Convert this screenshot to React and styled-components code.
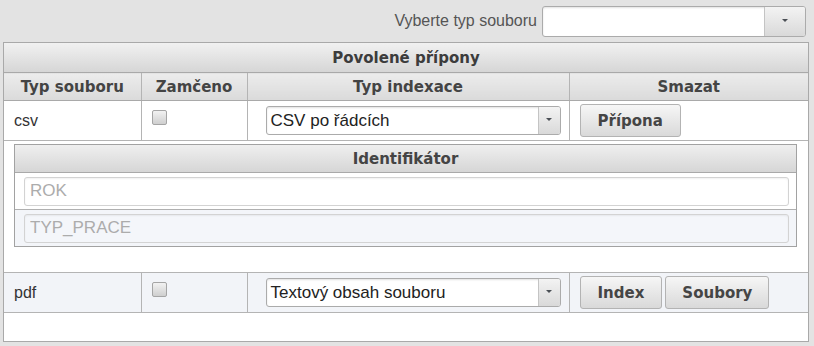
import React from 'react';
import styled, { createGlobalStyle } from 'styled-components';

const GlobalStyle = createGlobalStyle`
  html, body {
    margin: 0;
    padding: 0;
    background: #e3e3e3;
    font-family: "Liberation Sans", Arial, sans-serif;
  }
`;

const Page = styled.div`
  width: 814px;
  height: 346px;
  overflow: hidden;
`;

const TopBar = styled.div`
  display: flex;
  justify-content: flex-end;
  align-items: center;
  height: 42px;
  padding-right: 8px;
  box-sizing: border-box;
  label {
    color: #555;
    font-size: 16px;
    margin-right: 5px;
  }
`;

const SelectBox = styled.div`
  display: flex;
  width: ${p => p.$width}px;
  height: ${p => p.$height}px;
  box-sizing: border-box;
  border: 1px solid #ababab;
  border-radius: 3px;
  background: #fff;
  box-shadow: inset 0 1px 2px rgba(0, 0, 0, 0.12);
  overflow: hidden;
`;

const SelectText = styled.div`
  flex: 1;
  display: flex;
  align-items: center;
  padding-left: 4px;
  font-size: 17px;
  color: #222;
  white-space: nowrap;
`;

const SelectArrow = styled.div`
  width: ${p => p.$width}px;
  border-left: 1px solid #c4c4c4;
  background: linear-gradient(#f3f3f3, #d9d9d9);
  display: flex;
  align-items: center;
  justify-content: center;
  &::after {
    content: '';
    border-left: 3px solid transparent;
    border-right: 3px solid transparent;
    border-top: 3px solid #4a4f55;
    margin-bottom: 2px;
  }
`;

const Panel = styled.div`
  margin: 0 5px 0 3px;
  border: 1px solid #a9a9a9;
  background: #fff;
`;

const Table = styled.table`
  width: 100%;
  border-collapse: collapse;
  table-layout: fixed;
`;

const Caption = styled.th`
  height: 29px;
  padding: 0;
  font-family: "DejaVu Sans", Verdana, sans-serif;
  font-size: 15px;
  font-weight: bold;
  color: #3c3c3c;
  background: linear-gradient(#f1f1f1, #d6d6d6);
  border-bottom: 1px solid #a9a9a9;
`;

const HeadCell = styled.th`
  height: 27px;
  padding: 0;
  font-family: "DejaVu Sans", Verdana, sans-serif;
  font-size: 15px;
  font-weight: bold;
  color: #444;
  background: linear-gradient(#ececec, #dadada);
  border-bottom: 1px solid #a9a9a9;
  & + & {
    border-left: 1px solid #b4b4b4;
  }
`;

const Row = styled.tr`
  background: ${p => (p.$alt ? '#f2f4f8' : '#fff')};
  td {
    border-bottom: 1px solid #b4b4b4;
  }
`;

const Cell = styled.td`
  height: ${p => p.$h || 39}px;
  padding: 0 0 0 ${p => p.$pl ?? 10}px;
  font-size: 16px;
  color: #333;
  vertical-align: middle;
  & + & {
    border-left: 1px solid #b4b4b4;
  }
`;

const Checkbox = styled.span`
  display: inline-block;
  width: 15px;
  height: 15px;
  box-sizing: border-box;
  border: 1px solid #a5a5a5;
  border-radius: 2px;
  background: linear-gradient(#f2f2f2, #cfcfcf);
  margin-top: -7px;
  vertical-align: middle;
`;

const Buttons = styled.div`
  display: flex;
  gap: 3px;
`;

const Button = styled.button`
  height: 33px;
  padding: 0 ${p => p.$px || 16}px;
  font-family: "DejaVu Sans", Verdana, sans-serif;
  font-size: 15px;
  font-weight: bold;
  color: #454545;
  background: linear-gradient(#f6f6f6, #d9d9d9);
  border: 1px solid #b3b3b3;
  border-radius: 3px;
`;

const NestedCell = styled.td`
  padding: 3px 11px 25px 10px;
  border-bottom: 1px solid #b4b4b4;
`;

const Nested = styled.div`
  border: 1px solid #a2a2a2;
`;

const NestedHead = styled.div`
  height: 27px;
  display: flex;
  align-items: center;
  justify-content: center;
  font-family: "DejaVu Sans", Verdana, sans-serif;
  font-size: 15px;
  font-weight: bold;
  color: #444;
  background: linear-gradient(#efefef, #d6d6d6);
  border-bottom: 1px solid #a9a9a9;
`;

const NestedRow = styled.div`
  height: 36px;
  display: flex;
  align-items: center;
  padding: 0 7px 0 9px;
  background: ${p => (p.$alt ? '#f3f5f9' : '#fff')};
  & + & {
    border-top: 1px solid #b0b0b0;
  }
`;

const Input = styled.input`
  flex: 1;
  height: 29px;
  box-sizing: border-box;
  border: 1px solid #d3d3d3;
  border-radius: 3px;
  background: ${p => (p.$alt ? '#f4f6fa' : '#fff')};
  font-family: "Liberation Sans", Arial, sans-serif;
  font-size: 17px;
  padding: 0 5px;
  box-shadow: inset 0 1px 2px rgba(0, 0, 0, 0.06);
  &::placeholder {
    color: #acacac;
  }
`;

const Select = ({ value }) => (
  <SelectBox $width={295} $height={29}>
    <SelectText>{value}</SelectText>
    <SelectArrow $width={21} />
  </SelectBox>
);

const App = () => (
  <Page>
    <GlobalStyle />
    <TopBar>
      <label>Vyberte typ souboru</label>
      <SelectBox $width={264} $height={31}>
        <SelectText />
        <SelectArrow $width={40} />
      </SelectBox>
    </TopBar>
    <Panel>
      <Table>
        <colgroup>
          <col style={{ width: 137 }} />
          <col style={{ width: 106 }} />
          <col style={{ width: 322 }} />
          <col />
        </colgroup>
        <thead>
          <tr>
            <Caption colSpan={4}>Povolené přípony</Caption>
          </tr>
          <tr>
            <HeadCell>Typ souboru</HeadCell>
            <HeadCell>Zamčeno</HeadCell>
            <HeadCell>Typ indexace</HeadCell>
            <HeadCell>Smazat</HeadCell>
          </tr>
        </thead>
        <tbody>
          <Row>
            <Cell>csv</Cell>
            <Cell><Checkbox /></Cell>
            <Cell $pl={18}><Select value="CSV po řádcích" /></Cell>
            <Cell>
              <Buttons><Button $px={17}>Přípona</Button></Buttons>
            </Cell>
          </Row>
          <tr>
            <NestedCell colSpan={4}>
              <Nested>
                <NestedHead>Identifikátor</NestedHead>
                <NestedRow>
                  <Input placeholder="ROK" />
                </NestedRow>
                <NestedRow $alt>
                  <Input $alt placeholder="TYP_PRACE" />
                </NestedRow>
              </Nested>
            </NestedCell>
          </tr>
          <Row $alt>
            <Cell>pdf</Cell>
            <Cell><Checkbox /></Cell>
            <Cell $pl={18}><Select value="Textový obsah souboru" /></Cell>
            <Cell>
              <Buttons>
                <Button $px={17}>Index</Button>
                <Button $px={16}>Soubory</Button>
              </Buttons>
            </Cell>
          </Row>
          <tr>
            <Cell $h={28} colSpan={4} />
          </tr>
        </tbody>
      </Table>
    </Panel>
  </Page>
);

export default App;
